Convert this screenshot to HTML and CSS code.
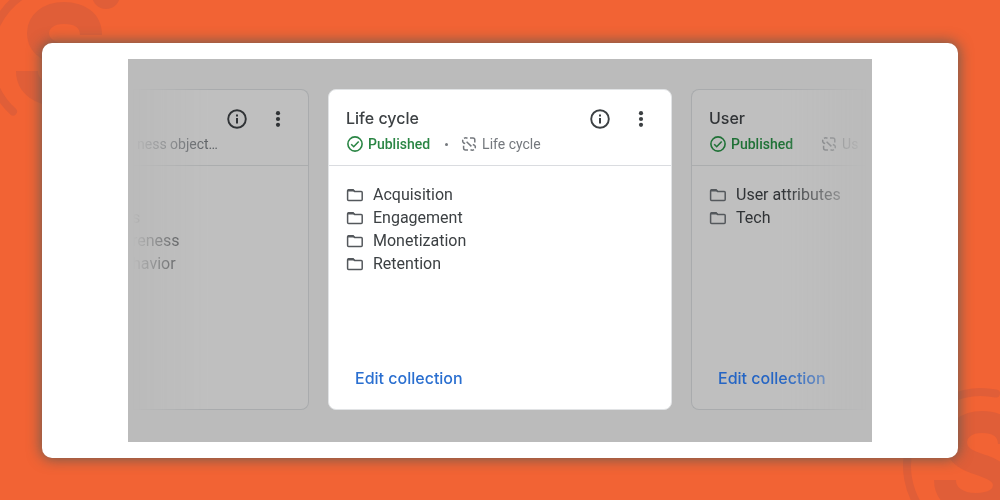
FILE: index.html
```html
<!DOCTYPE html>
<html lang="en">
<head>
<meta charset="utf-8">
<title>Collections</title>
<link rel="stylesheet" href="styles.css">
</head>
<body>
<svg class="sprite" aria-hidden="true">
  <symbol id="info" viewBox="0 0 24 24"><circle cx="12" cy="12" r="8.8" fill="none" stroke="currentColor" stroke-width="1.9"/><path fill="currentColor" d="M11 11h2v5.4h-2zM11 7.4h2v2h-2z"/></symbol>
  <symbol id="more" viewBox="0 0 24 24"><g fill="currentColor"><circle cx="12" cy="6.2" r="2.1"/><circle cx="12" cy="12" r="2.1"/><circle cx="12" cy="17.8" r="2.1"/></g></symbol>
  <symbol id="check" viewBox="0 0 18 18"><g fill="none" stroke="currentColor" stroke-width="1.6"><circle cx="9" cy="9" r="7.1"/><path d="M5.2 9.2l2.5 2.5 5-5.2"/></g></symbol>
  <symbol id="link" viewBox="0 0 16 16"><g fill="none" stroke="currentColor" stroke-width="1.5"><path d="M4.200 7.600C1.900 7 1.300 5.400 1.800 3.800M3 2.400C4.200 1.600 5.400 1.700 6.500 2.400M9 2H12Q13.800 2 13.800 3.800V6.500M11.800 8.400C14.100 9 14.700 10.600 14.200 12.200M13 13.600C11.800 14.400 10.600 14.300 9.500 13.600M7 14H4.500Q2.600 14 2.600 12V9.800M5.600 5.800L10.400 10.400"/></g></symbol>
  <symbol id="folder" viewBox="0 0 18 16"><path fill="none" stroke="currentColor" stroke-width="1.500" d="M2.600 2.800H7L8.600 4.400H15.200Q16.200 4.400 16.200 5.400V12.400Q16.200 13.400 15.200 13.400H2.600Q1.600 13.400 1.600 12.400V3.800Q1.600 2.800 2.600 2.800Z"/><path fill="currentColor" d="M2 2.200h5.200l1.800 2.300H2z"/></symbol>
  <symbol id="mark" viewBox="0 0 160 160"><g fill="none" stroke="currentColor"><path stroke-width="8" stroke-linecap="round" d="M33 135.500A74 74 0 0 1 98 8.500"/><path stroke-width="22" d="M111 59C111 44 99 37 84 37C68 37 58 46 58 57C58 73 74 77 86 81C100 86 106 92 106 100C106 112 95 119 78 119C60 119 47 110 47 95"/></g><circle cx="126" cy="19" r="14" fill="currentColor"/></symbol>
</svg>
<div class="backdrop" aria-hidden="true">
  <svg class="mark mark-top"><use href="#mark"/></svg>
  <svg class="mark mark-bottom"><use href="#mark"/></svg>
</div>
<main class="panel">
  <div class="stage">
    <div class="cards">
      <section class="card card-dim card-cut">
        <header class="card-head">
          <div class="title-row">
            <button class="icon-button" aria-label="Information"><svg><use href="#info"/></svg></button>
            <button class="icon-button" aria-label="More options"><svg><use href="#more"/></svg></button>
          </div>
          <p class="status"><span>ness object…</span></p>
        </header>
        <ul class="list">
          <li></li>
          <li>s</li>
          <li>reness</li>
          <li>havior</li>
        </ul>
      </section>
      <section class="card">
        <header class="card-head">
          <div class="title-row">
            <h2 class="title">Life cycle</h2>
            <button class="icon-button" aria-label="Information"><svg><use href="#info"/></svg></button>
            <button class="icon-button" aria-label="More options"><svg><use href="#more"/></svg></button>
          </div>
          <p class="status"><svg class="check"><use href="#check"/></svg><span class="published">Published</span><span class="dot"></span><svg class="link"><use href="#link"/></svg><span>Life cycle</span></p>
        </header>
        <ul class="list">
          <li><svg><use href="#folder"/></svg>Acquisition</li>
          <li><svg><use href="#folder"/></svg>Engagement</li>
          <li><svg><use href="#folder"/></svg>Monetization</li>
          <li><svg><use href="#folder"/></svg>Retention</li>
        </ul>
        <button class="edit">Edit collection</button>
      </section>
      <section class="card card-dim card-open">
        <header class="card-head">
          <div class="title-row">
            <h2 class="title">User</h2>
          </div>
          <p class="status"><svg class="check"><use href="#check"/></svg><span class="published">Published</span><span class="dot"></span><svg class="link"><use href="#link"/></svg><span>Us</span></p>
        </header>
        <ul class="list">
          <li><svg><use href="#folder"/></svg>User attributes</li>
          <li><svg><use href="#folder"/></svg>Tech</li>
        </ul>
        <button class="edit">Edit collection</button>
      </section>
    </div>
  </div>
</main>
</body>
</html>
```
FILE: styles.css
```css
* { box-sizing: border-box; }
body {
  margin: 0;
  min-height: 100vh;
  display: flex;
  padding: 43px 42px 42px;
  position: relative;
  background: #f26334;
  font-family: Roboto, "Liberation Sans", sans-serif;
  color: #3c4043;
}
.sprite { position: absolute; width: 0; height: 0; }
.backdrop { position: absolute; inset: 0; overflow: hidden; }
.mark { position: absolute; width: 160px; height: 160px; color: #e05e38; }
.mark-top { left: -20px; top: -24px; }
.mark-bottom { right: -58px; bottom: -45px; }
.panel {
  position: relative;
  flex: 1;
  min-width: 0;
  display: flex;
  padding: 16px 86px;
  background: #fff;
  border-radius: 10px;
  box-shadow: 0 0 14px 1px rgba(80, 90, 85, 0.85);
}
.stage {
  flex: 1;
  min-width: 0;
  display: flex;
  padding: 30px 0 32px;
  background: #bbb;
}
.cards {
  flex: 1;
  min-width: 0;
  display: grid;
  grid-template-columns: minmax(0, 1fr) 344px minmax(0, 1fr);
  gap: 19px;
  -webkit-mask-image: linear-gradient(to right, transparent 5px, #000 80px, #000 calc(100% - 90px), transparent calc(100% - 6px));
  mask-image: linear-gradient(to right, transparent 5px, #000 80px, #000 calc(100% - 90px), transparent calc(100% - 6px));
}
.card {
  display: flex;
  flex-direction: column;
  min-width: 0;
  background: #fff;
  border: 1px solid #e1e3e5;
  border-radius: 8px;
}
.card-dim { background: #bfbfbf; border-color: #a9abad; color: #303336; }
.card-cut { border-left: 0; border-radius: 0 8px 8px 0; }
.card-open { border-right: 0; border-radius: 8px 0 0 8px; }
.card-head {
  height: 76px;
  padding: 16px 18px 0 17px;
  border-bottom: 1px solid #dadce0;
}
.card-dim .card-head { border-color: #abadae; }
.title-row {
  display: flex;
  align-items: center;
  justify-content: flex-end;
  gap: 17px;
  height: 25px;
}
.title {
  flex: 1;
  margin: 0;
  font: 500 16px/25px Inter, Roboto, sans-serif;
}
button { border: 0; padding: 0; background: none; color: inherit; cursor: pointer; }
.icon-button { width: 24px; height: 24px; }
.icon-button svg { display: block; width: 24px; height: 24px; }
.status {
  display: flex;
  align-items: center;
  margin: 0;
  font-size: 14px;
  line-height: 26px;
  white-space: nowrap;
  color: #74787d;
}
.status svg { flex: none; }
.card-dim .status { color: #5f6367; }
.card-cut .status { padding-left: 9px; }
.card-cut .card-head { padding-left: 0; }
.check { width: 18px; height: 18px; margin-right: 4px; color: #2a8544; }
.published { font-weight: 500; color: #2a8544; }
.card-dim .check, .card-dim .published { color: #1f7136; }
.dot { width: 3px; height: 3px; margin: 0 13px 0 15px; border-radius: 50%; background: currentColor; }
.link { width: 16px; height: 16px; margin-right: 5px; }
.list {
  flex: 1;
  margin: 0;
  padding: 17px 17px 0;
  list-style: none;
  font-size: 16px;
  line-height: 23px;
  white-space: nowrap;
}
.card-cut .list { padding-left: 4px; }
.list li { display: flex; align-items: center; height: 23px; }
.list svg { flex: none; width: 18px; height: 16px; margin-right: 9px; color: #54585c; }
.edit {
  align-self: flex-start;
  margin: 0 0 19px 26px;
  font: 500 16px/24px Inter, Roboto, sans-serif;
  white-space: nowrap;
  color: #2a6fd0;
}
.card-dim .edit { color: #2565c4; }
```
